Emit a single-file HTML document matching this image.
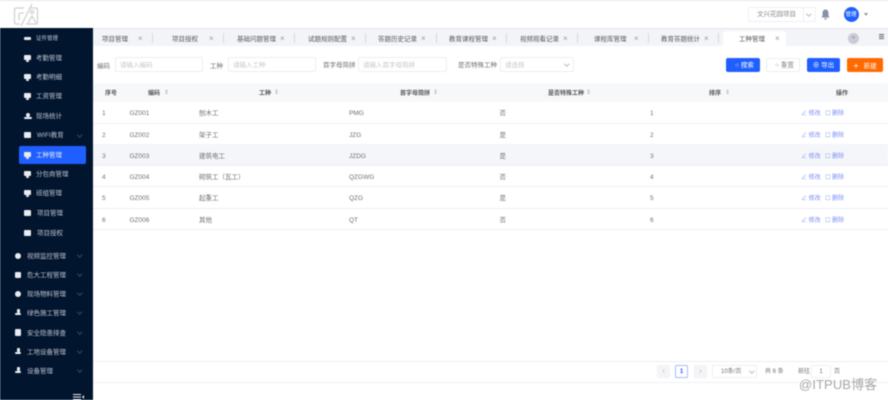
<!DOCTYPE html>
<html lang="zh"><head><meta charset="utf-8"><title>工种管理</title>
<style>
*{box-sizing:border-box;margin:0;padding:0}
html,body{width:888px;height:400px;overflow:hidden;background:#fff}
body{position:relative;font-family:"Liberation Sans","Noto Sans CJK SC",sans-serif;font-size:6.5px;color:#707070;filter:blur(.4px)}
.a{position:absolute}
.t{position:absolute;height:10px;line-height:10px;white-space:nowrap;margin-top:1.5px}
.side{position:absolute;left:0;top:28px;width:92.5px;height:372px;background:#02152e}
.m{position:absolute;color:#bcc4cf;height:10px;line-height:10px;white-space:nowrap;font-size:6.5px;margin-top:1px}
.ic{position:absolute;background:#e8ebf0;border-radius:1px}
.ch{position:absolute;width:3.5px;height:3.5px;border-right:1px solid #3d4a5c;border-bottom:1px solid #3d4a5c;transform:rotate(45deg)}
.tab{position:absolute;top:33px;height:10px;line-height:10px;color:#555;font-size:6.5px;white-space:nowrap;margin-top:1.5px}
.x{position:absolute;top:33px;height:10px;line-height:10px;color:#999;font-size:8px;margin-top:1px}
.sep{position:absolute;top:33px;width:1px;height:10px;background:#d5d8de}
.inp{position:absolute;top:57px;height:15px;border:1px solid #eceef2;border-radius:2px;background:#fff;color:#c4c8cf;line-height:15px;padding-left:4px;font-size:6.5px;white-space:nowrap}
.btn{position:absolute;top:58px;height:14px;border-radius:2px;color:#fff;line-height:16px;text-align:center;font-size:6.5px;background:#1f5fff}
.h{position:absolute;top:87px;height:10px;line-height:10px;color:#555;font-weight:bold;font-size:6px;white-space:nowrap;margin-top:1.5px}
.s{position:absolute;top:88px;height:9px;line-height:9px;color:#aaa;font-size:6px;margin-top:1px}
.row{position:absolute;left:93px;width:795px;height:21.5px;border-bottom:1px solid #eef0f3}
.c{position:absolute;height:10px;line-height:10px;white-space:nowrap;color:#707070;font-size:6.5px;margin-top:2px}
.op{position:absolute;height:10px;line-height:10px;white-space:nowrap;color:#7a90f5;font-size:6px;margin-top:2px}
</style></head><body>
<div class="a" style="left:0;top:0;width:888px;height:1px;background:#e6e6e6"></div>
<svg class="a" style="left:13px;top:3px" width="26" height="24" viewBox="0 0 26 24" fill="none" stroke="#d2d2d2" stroke-width="1.3"><path d="M11 5H3Q1.500 5 1.500 6.500V19Q1.500 21 3 21H7"/><path d="M17 5H23Q24.500 5 24.500 6.500V19Q24.500 21 23 21H13"/><path d="M19 1L8 23"/><path d="M6 17V12Q6 10 8 10H11"/><path d="M15 20L19 13L23 20"/><circle cx="19" cy="9" r="1.500"/></svg>
<div class="a" style="left:0;top:28px;width:888px;height:1px;background:#e4e6ea"></div>

<div class="a" style="left:748px;top:7px;width:68px;height:15px;border:1px solid #eeeff2;border-radius:2px"></div>
<div class="t" style="left:757px;top:8.500px;color:#888">文兴花园项目</div>
<div class="a" style="left:803px;top:8px;width:1px;height:13px;background:#f0f0f2"></div>
<div class="ch" style="left:807px;top:12px;border-color:#bbb"></div>
<svg class="a" style="left:821px;top:9px" width="9" height="11" viewBox="0 0 9 11"><path d="M4.500 0.500C2.300.5 1.500 2.500 1.500 4.500V7L0.300 8.500H8.700L7.500 7V4.500C7.500 2.500 6.700.5 4.500.5Z" fill="#8792a8"/><rect x="3.300" y="9.200" width="2.400" height="1.300" fill="#8792a8"/></svg>
<div class="a" style="left:843.500px;top:6.500px;width:15px;height:15px;border-radius:50%;background:#1f5fff;color:#fff;font-size:5.500px;line-height:16px;text-align:center;white-space:nowrap">管理</div>
<div class="a" style="left:864px;top:13px;width:0;height:0;border:2.500px solid transparent;border-top:3px solid #8c93a0"></div>

<div class="side"></div>
<div class="a" style="left:19px;top:146px;width:67px;height:18px;background:#1f5fff;border-radius:2px"></div>
<div class="m" style="left:36px;top:33px;font-size:5.500px">证件管理</div>
<div class="m" style="left:36px;top:53px">考勤管理</div>
<div class="m" style="left:36px;top:72px">考勤明细</div>
<div class="m" style="left:36px;top:91px">工资管理</div>
<div class="m" style="left:36px;top:111px">现场统计</div>
<div class="m" style="left:37px;top:130px">WIFI教育</div>
<div class="m" style="left:36px;top:150px;color:#e6ecff">工种管理</div>
<div class="m" style="left:36px;top:169px">分包商管理</div>
<div class="m" style="left:36px;top:188px">班组管理</div>
<div class="m" style="left:37px;top:208px">项目管理</div>
<div class="m" style="left:37px;top:228px">项目授权</div>
<div class="m" style="left:27px;top:251px">视频监控管理</div>
<div class="m" style="left:27px;top:270px">危大工程管理</div>
<div class="m" style="left:27px;top:289px">现场物料管理</div>
<div class="m" style="left:27px;top:308px">绿色施工管理</div>
<div class="m" style="left:27px;top:328px">安全隐患排查</div>
<div class="m" style="left:27px;top:347px">工地设备管理</div>
<div class="m" style="left:27px;top:366px">设备管理</div>

<div class="ic" style="left:24px;top:37px;width:7px;height:3px"></div>
<div class="ic" style="left:24px;top:55px;width:7px;height:5px"></div><div class="ic" style="left:26px;top:60px;width:3px;height:2px"></div>
<div class="ic" style="left:24px;top:74px;width:7px;height:5px"></div><div class="ic" style="left:26px;top:79px;width:3px;height:2px"></div>
<div class="ic" style="left:24px;top:93px;width:7px;height:5px"></div><div class="ic" style="left:26px;top:98px;width:3px;height:2px"></div>
<div class="ic" style="left:26px;top:113px;width:4px;height:4px;border-radius:50%"></div><div class="ic" style="left:24px;top:117px;width:8px;height:2px"></div>
<div class="ic" style="left:24px;top:132px;width:7px;height:6px"></div>
<div class="ic" style="left:24px;top:152px;width:7px;height:5px"></div><div class="ic" style="left:26px;top:157px;width:3px;height:2px"></div>
<div class="ic" style="left:24px;top:171px;width:7px;height:5px"></div><div class="ic" style="left:26px;top:176px;width:3px;height:2px"></div>
<div class="ic" style="left:24px;top:190px;width:7px;height:5px"></div><div class="ic" style="left:26px;top:195px;width:3px;height:2px"></div>
<div class="ic" style="left:24px;top:210px;width:7px;height:6px"></div>
<div class="ic" style="left:24px;top:230px;width:7px;height:6px"></div>
<div class="ic" style="left:15px;top:253px;width:6px;height:6px;border-radius:50%"></div>
<div class="ic" style="left:15px;top:272px;width:6px;height:6px"></div>
<div class="ic" style="left:15px;top:291px;width:6px;height:6px;border-radius:50%"></div>
<div class="ic" style="left:17px;top:309px;width:3px;height:4px"></div><div class="ic" style="left:15px;top:313px;width:6px;height:2px"></div>
<div class="ic" style="left:15px;top:329px;width:6px;height:7px"></div>
<div class="ic" style="left:17px;top:348px;width:3px;height:4px"></div><div class="ic" style="left:15px;top:352px;width:6px;height:2px"></div>
<div class="ic" style="left:17px;top:367px;width:3px;height:4px"></div><div class="ic" style="left:15px;top:371px;width:6px;height:2px"></div>

<div class="ch" style="left:78px;top:133px"></div>
<div class="ch" style="left:78px;top:253px"></div>
<div class="ch" style="left:78px;top:272px"></div>
<div class="ch" style="left:78px;top:291px"></div>
<div class="ch" style="left:78px;top:310px"></div>
<div class="ch" style="left:78px;top:330px"></div>
<div class="ch" style="left:78px;top:349px"></div>
<div class="ch" style="left:78px;top:368px"></div>
<svg class="a" style="left:73px;top:394px" width="11" height="6" viewBox="0 0 11 6" fill="#e8ebf0"><rect width="8" height="1"/><rect y="2.500" width="8" height="1"/><rect y="5" width="8" height="1"/><path d="M11 1V5L9 3Z"/></svg>

<div class="a" style="left:92.500px;top:29px;width:796px;height:17px;background:#f3f4f8"></div>
<div class="tab" style="left:102px">项目管理</div><div class="x" style="left:138px">×</div><div class="sep" style="left:152px"></div>
<div class="tab" style="left:172px">项目授权</div><div class="x" style="left:209px">×</div><div class="sep" style="left:223px"></div>
<div class="tab" style="left:237px">基础问题管理</div><div class="x" style="left:280px">×</div><div class="sep" style="left:294px"></div>
<div class="tab" style="left:308px">试题规则配置</div><div class="x" style="left:351px">×</div><div class="sep" style="left:365px"></div>
<div class="tab" style="left:378px">答题历史记录</div><div class="x" style="left:421px">×</div><div class="sep" style="left:436px"></div>
<div class="tab" style="left:449px">教育课程管理</div><div class="x" style="left:492px">×</div><div class="sep" style="left:506px"></div>
<div class="tab" style="left:520px">视频观看记录</div><div class="x" style="left:563px">×</div><div class="sep" style="left:577px"></div>
<div class="tab" style="left:594px">课程库管理</div><div class="x" style="left:634px">×</div><div class="sep" style="left:648px"></div>
<div class="tab" style="left:661px">教育答题统计</div><div class="x" style="left:704px">×</div><div class="sep" style="left:718px"></div>
<div class="a" style="left:723px;top:31px;width:63px;height:15px;background:#fff;border-radius:3px 3px 0 0"></div>
<div class="tab" style="left:739px">工种管理</div><div class="x" style="left:775px">×</div>
<div class="a" style="left:848px;top:33px;width:11px;height:11px;border-radius:50%;background:#c8ccd6;color:#888;font-size:6px;line-height:11px;text-align:center">«</div>
<div class="a" style="left:879px;top:34px;width:5px;height:5px;border-top:1px solid #666;border-bottom:1px solid #666"></div><div class="a" style="left:879px;top:36px;width:5px;height:1px;background:#666"></div>

<div class="t" style="left:97px;top:60px">编码</div>
<div class="inp" style="left:115px;width:88px">请输入编码</div>
<div class="t" style="left:210px;top:60px">工种</div>
<div class="inp" style="left:228px;width:88px">请输入工种</div>
<div class="t" style="left:323px;top:59px">首字母简拼</div>
<div class="inp" style="left:358px;width:89px">请输入首字母简拼</div>
<div class="t" style="left:458px;top:59px">是否特殊工种</div>
<div class="inp" style="left:500px;width:74px">请选择</div>
<div class="ch" style="left:565px;top:62px;border-color:#bbb"></div>

<div class="btn" style="left:726px;width:34px;padding-left:3px">○ 搜索</div>
<div class="btn" style="left:766px;width:34px;background:#fff;border:1px solid #eceef2;color:#888;line-height:14px;padding-left:3px">○ 重置</div>
<div class="btn" style="left:807px;width:33px">⊕ 导出</div>
<div class="btn" style="left:847px;width:36px;background:#ff6a00"><span style="font-size:9px;vertical-align:-1px;margin-right:5px">+</span>新建</div>

<div class="a" style="left:93px;top:83px;width:795px;height:19px;background:#f7f8fa"></div>
<div class="h" style="left:105px">序号</div>
<div class="h" style="left:148px">编码</div><div class="s" style="left:164px">⇕</div>
<div class="h" style="left:259px">工种</div><div class="s" style="left:274px">⇕</div>
<div class="h" style="left:400px">首字母简拼</div><div class="s" style="left:433px">⇕</div>
<div class="h" style="left:548px">是否特殊工种</div><div class="s" style="left:586px">⇕</div>
<div class="h" style="left:709px">排序</div><div class="s" style="left:725px">⇕</div>
<div class="h" style="left:836px">操作</div>

<div class="row" style="top:102px"></div>
<div class="row" style="top:123px"></div>
<div class="row" style="top:144px;background:#f5f6fa"></div>
<div class="row" style="top:165.500px"></div>
<div class="row" style="top:187px"></div>
<div class="row" style="top:208px"></div>

<div class="c" style="left:102px;top:107px">1</div><div class="c" style="left:129.500px;top:107px">GZ001</div><div class="c" style="left:199px;top:107px">刨木工</div><div class="c" style="left:349px;top:107px">PMG</div><div class="c" style="left:499.500px;top:107px">否</div><div class="c" style="left:650px;top:107px">1</div>
<div class="op" style="left:801px;top:107px">∠ 修改</div><div class="op" style="left:825px;top:107px">☐ 删除</div>
<div class="c" style="left:102px;top:129px">2</div><div class="c" style="left:129.500px;top:129px">GZ002</div><div class="c" style="left:199px;top:129px">架子工</div><div class="c" style="left:349px;top:129px">JZG</div><div class="c" style="left:499.500px;top:129px">是</div><div class="c" style="left:650px;top:129px">2</div>
<div class="op" style="left:801px;top:129px">∠ 修改</div><div class="op" style="left:825px;top:129px">☐ 删除</div>
<div class="c" style="left:102px;top:150px">3</div><div class="c" style="left:129.500px;top:150px">GZ003</div><div class="c" style="left:199px;top:150px">建筑电工</div><div class="c" style="left:349px;top:150px">JZDG</div><div class="c" style="left:499.500px;top:150px">是</div><div class="c" style="left:650px;top:150px">3</div>
<div class="op" style="left:801px;top:150px">∠ 修改</div><div class="op" style="left:825px;top:150px">☐ 删除</div>
<div class="c" style="left:102px;top:171px">4</div><div class="c" style="left:129.500px;top:171px">GZ004</div><div class="c" style="left:199px;top:171px">砌筑工（瓦工）</div><div class="c" style="left:349px;top:171px">QZGWG</div><div class="c" style="left:499.500px;top:171px">否</div><div class="c" style="left:650px;top:171px">4</div>
<div class="op" style="left:801px;top:171px">∠ 修改</div><div class="op" style="left:825px;top:171px">☐ 删除</div>
<div class="c" style="left:102px;top:192px">5</div><div class="c" style="left:129.500px;top:192px">GZ005</div><div class="c" style="left:199px;top:192px">起重工</div><div class="c" style="left:349px;top:192px">QZG</div><div class="c" style="left:499.500px;top:192px">是</div><div class="c" style="left:650px;top:192px">5</div>
<div class="op" style="left:801px;top:192px">∠ 修改</div><div class="op" style="left:825px;top:192px">☐ 删除</div>
<div class="c" style="left:102px;top:214px">6</div><div class="c" style="left:129.500px;top:214px">GZ006</div><div class="c" style="left:199px;top:214px">其他</div><div class="c" style="left:349px;top:214px">QT</div><div class="c" style="left:499.500px;top:214px">否</div><div class="c" style="left:650px;top:214px">6</div>
<div class="op" style="left:801px;top:214px">∠ 修改</div><div class="op" style="left:825px;top:214px">☐ 删除</div>

<div class="a" style="left:93px;top:361px;width:795px;height:1px;background:#eceef1"></div>
<div class="a" style="left:93px;top:382px;width:795px;height:1px;background:#f0f1f3"></div>
<div class="a" style="left:657px;top:365px;width:13px;height:13px;background:#f3f4f6;border-radius:1px;color:#aaa;text-align:center;line-height:13px;font-size:7px">‹</div>
<div class="a" style="left:675px;top:365px;width:13px;height:13px;border:1px solid #a9bdf8;border-radius:1px;color:#2a60f0;text-align:center;line-height:12px;font-size:6.500px;font-weight:bold">1</div>
<div class="a" style="left:694px;top:365px;width:13px;height:13px;background:#f3f4f6;border-radius:1px;color:#aaa;text-align:center;line-height:13px;font-size:7px">›</div>
<div class="a" style="left:712px;top:365px;width:45px;height:13px;border:1px solid #eeeff2;border-radius:1px"></div>
<div class="t" style="left:721px;top:365.500px;font-size:6px">10条/页</div>
<div class="ch" style="left:750px;top:369px;border-color:#bbb"></div>
<div class="t" style="left:765px;top:365.500px;font-size:6px">共 6 条</div>
<div class="t" style="left:798px;top:365.500px;font-size:6px">前往</div>
<div class="a" style="left:811px;top:365px;width:20px;height:13px;border:1px solid #eeeff2;border-radius:1px;text-align:center;line-height:12px;font-size:6px">1</div>
<div class="t" style="left:834px;top:365.500px;font-size:6px">页</div>
<div class="a" style="left:799px;top:377px;height:16px;line-height:16px;font-size:13px;color:#a8a8a8;white-space:nowrap;letter-spacing:.1px">@ITPUB博客</div>
</body></html>
